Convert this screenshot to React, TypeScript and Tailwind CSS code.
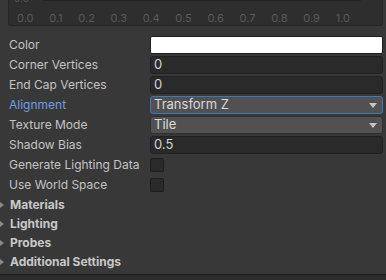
import React from 'react';

const FONT = { fontFamily: 'Inter, "Noto Sans", sans-serif' };

const ticks = ['0.0', '0.1', '0.2', '0.3', '0.4', '0.5', '0.6', '0.7', '0.8', '0.9', '1.0'];

type Row =
  | { label: string; kind: 'color' }
  | { label: string; kind: 'number'; value: string }
  | { label: string; kind: 'select'; value: string; focused?: boolean }
  | { label: string; kind: 'check' };

const rows: Row[] = [
  { label: 'Color', kind: 'color' },
  { label: 'Corner Vertices', kind: 'number', value: '0' },
  { label: 'End Cap Vertices', kind: 'number', value: '0' },
  { label: 'Alignment', kind: 'select', value: 'Transform Z', focused: true },
  { label: 'Texture Mode', kind: 'select', value: 'Tile' },
  { label: 'Shadow Bias', kind: 'number', value: '0.5' },
  { label: 'Generate Lighting Data', kind: 'check' },
  { label: 'Use World Space', kind: 'check' },
];

const foldouts = ['Materials', 'Lighting', 'Probes', 'Additional Settings'];

const Field = ({ row }: { row: Row }) => {
  if (row.kind === 'color') {
    return <div className="w-[233px] h-[18px] bg-white border border-[#1e1e1e] rounded-[2px]" />;
  }
  if (row.kind === 'number') {
    return (
      <div className="w-[233px] h-[18px] bg-[#2a2a2a] border border-[#212121] rounded-[3px] flex items-center px-[3px] text-[13px] text-[#d2d2d2]">
        {row.value}
      </div>
    );
  }
  if (row.kind === 'select') {
    return (
      <div
        className={`w-[233px] h-[18px] bg-[#515151] rounded-[3px] flex items-center justify-between pl-[3px] pr-[5px] text-[13px] text-[#dadada] border ${
          row.focused ? 'border-[#3a79bb]' : 'border-[#303030]'
        }`}
      >
        <span>{row.value}</span>
        <svg width="8" height="5" viewBox="0 0 8 5">
          <path d="M0 0 L8 0 L4 5 Z" fill="#c4c4c4" />
        </svg>
      </div>
    );
  }
  return <div className="w-[14px] h-[14px] bg-[#2a2a2a] border border-[#1e1e1e] rounded-[2px]" />;
};

export default function App() {
  return (
    <div className="w-[386px] h-[280px] bg-[#383838] overflow-hidden flex flex-col" style={FONT}>
      {/* curve preview panel, cut off at the top */}
      <div className="relative ml-[8px] mr-[3px] h-[26px] bg-[#2e2e2e] border-x border-b border-[#262626] rounded-b-[3px]">
        <div className="absolute left-[5px] top-[-9px] text-[10px] text-[#555]">0.5</div>
        <div className="absolute left-[34px] top-0 w-[318px] h-[1px] bg-[#232323]" />
        <div className="absolute left-[8px] w-[333px] top-[11px] flex justify-between text-[11px] leading-[14px] text-[#595959]">
          {ticks.map((t) => (
            <span key={t}>{t}</span>
          ))}
        </div>
      </div>

      <div className="mt-[9px] flex flex-col">
        {rows.map((row) => (
          <div key={row.label} className="h-[20px] flex items-center">
            <div
              className={`w-[150px] pl-[9px] text-[12px] ${
                row.kind === 'select' && row.focused ? 'text-[#6d9ee4]' : 'text-[#c4c4c4]'
              }`}
            >
              {row.label}
            </div>
            <Field row={row} />
          </div>
        ))}
      </div>

      <div className="flex flex-col">
        {foldouts.map((f) => (
          <div key={f} className="h-[19px] flex items-center">
            <svg width="4" height="6" viewBox="0 0 4 6" className="mr-[6px]">
              <path d="M0 0 L4 3 L0 6 Z" fill="#8a8a8a" />
            </svg>
            <span className="text-[12px] font-bold text-[#c8c8c8]">{f}</span>
          </div>
        ))}
      </div>

      <div className="mt-auto h-[6px] border-t border-[#1f1f1f] bg-[#2c2c2c]" />
    </div>
  );
}
